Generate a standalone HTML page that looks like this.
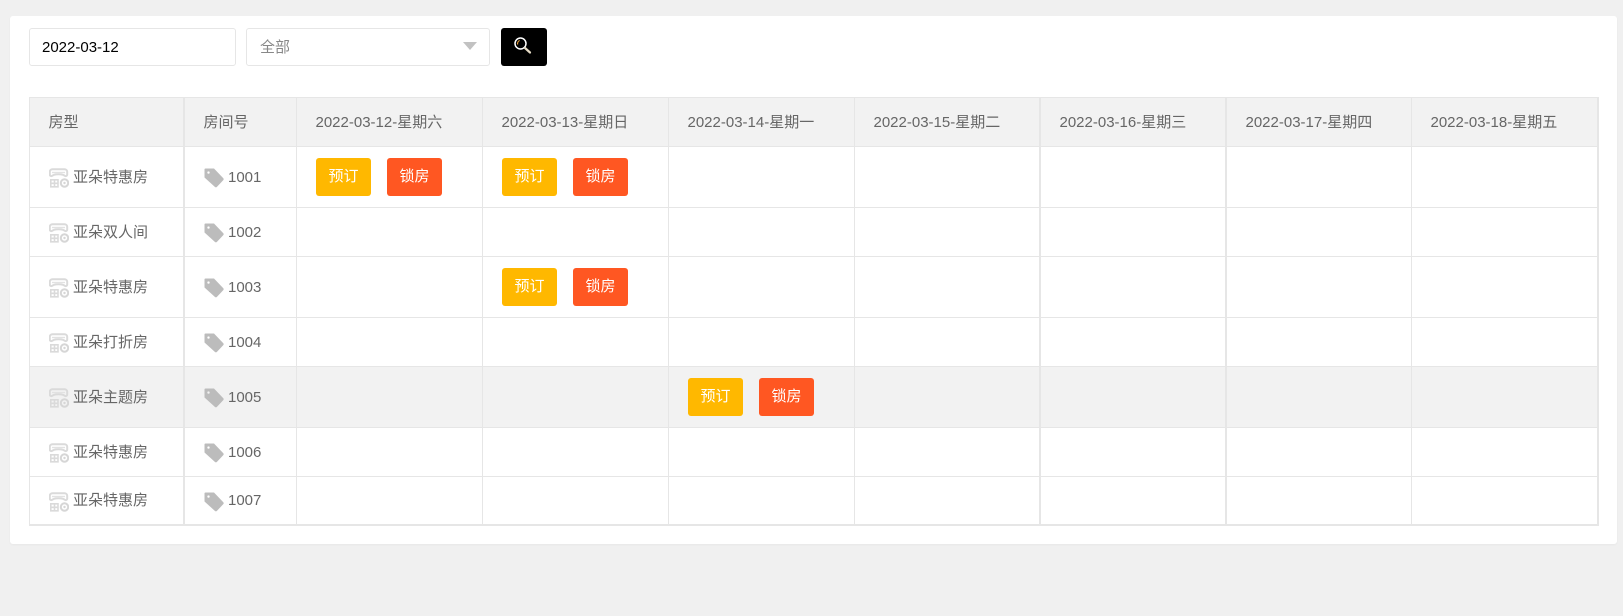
<!DOCTYPE html>
<html lang="zh-CN">
<head>
<meta charset="utf-8">
<title>房态</title>
<style>
*{box-sizing:border-box;margin:0;padding:0}
html,body{width:1623px;height:616px;overflow:hidden;background:#f0f0f0}
body{position:relative;font-family:"Liberation Sans","Noto Sans CJK SC",sans-serif;font-size:15px;color:#666}
.card{position:absolute;left:10px;top:16px;width:1607px;height:528px;background:#fff;border-radius:3px;box-shadow:0 1px 2px rgba(0,0,0,.04)}
.inp{position:absolute;top:28px;height:38px;background:#fff;border:1px solid #e6e6e6;border-radius:3px;line-height:37px;padding-left:12px;font-size:15px}
.date{left:29px;width:207px;color:#000}
.sel{left:246px;width:244px;color:#888;padding-left:13px}
.sel i{position:absolute;right:12px;top:13px;width:0;height:0;border:7px solid transparent;border-top:8px solid #c2c2c2;border-bottom:0}
.go{position:absolute;left:501px;top:28px;width:46px;height:38px;background:#000;border-radius:3px}
.go svg{position:absolute;left:12px;top:8px}
table{position:absolute;left:29px;top:97px;width:1570px;border-collapse:separate;border-spacing:0;table-layout:fixed;border-left:1px solid #e6e6e6;border-top:1px solid #e6e6e6}
th,td{font-weight:400;text-align:left;padding:0 0 0 19px;border-right:1px solid #e6e6e6;border-bottom:1px solid #e6e6e6;white-space:nowrap;vertical-align:middle}
th{background:#f2f2f2;height:49px;padding:0 0 2px 18.5px}
tr.a td{height:61px}
tr.b td{height:49px}
tr.h td{background:#f2f2f2}
.th{border-right-width:2px}
tr:last-child td{border-bottom-width:2px;height:49px}
.t{display:inline-block;vertical-align:middle;margin-right:4px;position:relative;top:1px}
.k{left:-.5px}
.v{display:inline-block;vertical-align:middle}
.c{position:relative;top:-1px}
.btn{display:inline-block;width:55px;height:38px;line-height:37px;text-align:center;color:#fff;border-radius:3px;font-size:15px;vertical-align:middle}
.y{background:#ffb800;margin-right:16px}
.r{background:#ff5722}
</style>
</head>
<body>
<div class="card"></div>
<div class="inp date">2022-03-12</div>
<div class="inp sel">全部<i></i></div>
<div class="go"><svg width="22" height="22" viewBox="0 0 22 22"><circle cx="7.500" cy="7.500" r="5.500" fill="none" stroke="#fff" stroke-width="1.500"/><path d="M12 12l5 4.500" stroke="#e6dcc6" stroke-width="2.200" stroke-linecap="round"/><path d="M4.700 8.500a3.200 3.200 0 0 1 2-4" fill="none" stroke="#e8a03c" stroke-width="1.100"/></svg></div>
<svg width="0" height="0" style="position:absolute">
<symbol id="store" viewBox="0 0 20 20">
<path d="M3.500 1.200h12c1.500 0 2.700 1.100 2.700 2.600v2.700c0 1-.7 1.600-1.600 1.600-.9 0-1.500-.9-2.600-1.300-1.400-.5-3-.6-4.500-.6s-3.100.1-4.500.6c-1.100.4-1.700 1.300-2.600 1.300-.9 0-1.600-.6-1.600-1.600V3.800C.8 2.300 2 1.200 3.500 1.200z" fill="none" stroke="#dadada" stroke-width="2"/>
<path d="M3 4.500h13" stroke="#e2e2e2" stroke-width="1.300"/>
<path d="M1.800 11.800h7.200v7H1.800zM1.800 15.300h7.200M5.500 11.800v7" fill="none" stroke="#dadada" stroke-width="1.600"/>
<circle cx="15.500" cy="15" r="3.700" fill="none" stroke="#d6d6d6" stroke-width="2"/><circle cx="15.500" cy="15" r="1.200" fill="#d6d6d6"/>
</symbol>
<symbol id="tag" viewBox="0 0 20 20">
<path fill-rule="evenodd" fill="#bcbcbc" d="M1.500 0.500h8.500l9.300 9.800c.5.5.5 1.300 0 1.800l-6.500 6.900c-.5.500-1.300.5-1.800 0L.5 9.500V1.500c0-.6.400-1 1-1zM4.500 3.400a1.200 1.200 0 1 0 0 2.400a1.200 1.200 0 0 0 0-2.400z"/>
</symbol>
</svg>
<table>
<colgroup><col style="width:155px"><col style="width:112px"><col style="width:186px"><col style="width:186px"><col style="width:186px"><col style="width:186px"><col style="width:186px"><col style="width:185px"><col style="width:187px"></colgroup>
<tr><th class="th">房型</th><th>房间号</th><th>2022-03-12-星期六</th><th>2022-03-13-星期日</th><th>2022-03-14-星期一</th><th class="th">2022-03-15-星期二</th><th class="th">2022-03-16-星期三</th><th>2022-03-17-星期四</th><th class="th">2022-03-18-星期五</th></tr>
<tr class="a"><td class="th"><svg class="t" width="20" height="20"><use href="#store"/></svg><span class="v c">亚朵特惠房</span></td><td><svg class="t k" width="20" height="20"><use href="#tag"/></svg><span class="v">1001</span></td><td><span class="btn y">预订</span><span class="btn r">锁房</span></td><td><span class="btn y">预订</span><span class="btn r">锁房</span></td><td></td><td class="th"></td><td class="th"></td><td></td><td class="th"></td></tr>
<tr class="b"><td class="th"><svg class="t" width="20" height="20"><use href="#store"/></svg><span class="v c">亚朵双人间</span></td><td><svg class="t k" width="20" height="20"><use href="#tag"/></svg><span class="v">1002</span></td><td></td><td></td><td></td><td class="th"></td><td class="th"></td><td></td><td class="th"></td></tr>
<tr class="a"><td class="th"><svg class="t" width="20" height="20"><use href="#store"/></svg><span class="v c">亚朵特惠房</span></td><td><svg class="t k" width="20" height="20"><use href="#tag"/></svg><span class="v">1003</span></td><td></td><td><span class="btn y">预订</span><span class="btn r">锁房</span></td><td></td><td class="th"></td><td class="th"></td><td></td><td class="th"></td></tr>
<tr class="b"><td class="th"><svg class="t" width="20" height="20"><use href="#store"/></svg><span class="v c">亚朵打折房</span></td><td><svg class="t k" width="20" height="20"><use href="#tag"/></svg><span class="v">1004</span></td><td></td><td></td><td></td><td class="th"></td><td class="th"></td><td></td><td class="th"></td></tr>
<tr class="a h"><td class="th"><svg class="t" width="20" height="20"><use href="#store"/></svg><span class="v c">亚朵主题房</span></td><td><svg class="t k" width="20" height="20"><use href="#tag"/></svg><span class="v">1005</span></td><td></td><td></td><td><span class="btn y">预订</span><span class="btn r">锁房</span></td><td class="th"></td><td class="th"></td><td></td><td class="th"></td></tr>
<tr class="b"><td class="th"><svg class="t" width="20" height="20"><use href="#store"/></svg><span class="v c">亚朵特惠房</span></td><td><svg class="t k" width="20" height="20"><use href="#tag"/></svg><span class="v">1006</span></td><td></td><td></td><td></td><td class="th"></td><td class="th"></td><td></td><td class="th"></td></tr>
<tr class="b"><td class="th"><svg class="t" width="20" height="20"><use href="#store"/></svg><span class="v c">亚朵特惠房</span></td><td><svg class="t k" width="20" height="20"><use href="#tag"/></svg><span class="v">1007</span></td><td></td><td></td><td></td><td class="th"></td><td class="th"></td><td></td><td class="th"></td></tr>
</table>
</body>
</html>
